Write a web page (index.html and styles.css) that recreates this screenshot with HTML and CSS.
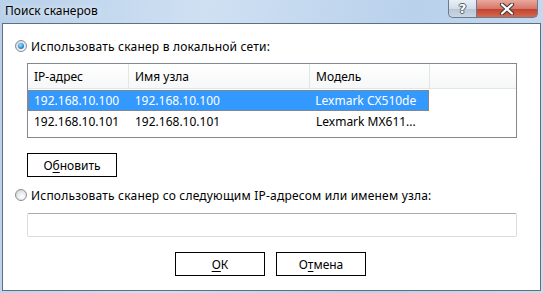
FILE: index.html
```html
<!DOCTYPE html>
<html>
<head>
    <title>Поиск сканеров</title>
    <link rel="stylesheet" href="styles.css">
</head>
<body>
    <div class="window">
        <div class="titlebar">
            <span class="title">Поиск сканеров</span>
            <div class="caption-buttons">
                <div class="cap-btn help-btn">?</div>
                <div class="cap-btn close-btn">
                    <svg width="16" height="12" viewBox="0 0 16 12">
                        <path d="M3 1.5 L13 10.5 M13 1.5 L3 10.5" stroke="#3a3a3a" stroke-width="4.2" stroke-linecap="round"/>
                        <path d="M3 1.5 L13 10.5 M13 1.5 L3 10.5" stroke="#fff" stroke-width="2.2" stroke-linecap="round"/>
                    </svg>
                </div>
            </div>
        </div>
        <div class="client">
            <label class="radio-row">
                <span class="radio checked"></span>
                <span>Использовать сканер в локальной сети:</span>
            </label>

            <div class="listview">
                <div class="lv-row lv-header">
                    <div class="col col-ip">IP-адрес</div>
                    <div class="col col-host">Имя узла</div>
                    <div class="col col-model">Модель</div>
                    <div class="col col-rest"></div>
                </div>
                <div class="lv-row selected">
                    <div class="col col-ip">192.168.10.100</div>
                    <div class="col col-host">192.168.10.100</div>
                    <div class="col col-model">Lexmark CX510de</div>
                </div>
                <div class="lv-row">
                    <div class="col col-ip">192.168.10.101</div>
                    <div class="col col-host">192.168.10.101</div>
                    <div class="col col-model">Lexmark MX611...</div>
                </div>
            </div>

            <button class="btn refresh-btn">О<u>б</u>новить</button>

            <label class="radio-row second">
                <span class="radio"></span>
                <span>Использовать сканер со следующим IP-адресом или именем узла:</span>
            </label>

            <input class="host-input" type="text">

            <div class="dialog-buttons">
                <button class="btn"><u>О</u>К</button>
                <button class="btn">О<u>т</u>мена</button>
            </div>
        </div>
    </div>
</body>
</html>
```

FILE: styles.css
```css
body {
    margin: 0;
    font-family: "Noto Sans", "Open Sans", sans-serif;
    font-size: 12px;
    color: #000;
    background-color: #c4d9ef;
}

.window {
    width: 543px;
    height: 293px;
    box-sizing: border-box;
    padding: 0 2px 2px 2px;
    background: linear-gradient(100deg, #b8d0ea 0%, #cfe0f2 35%, #b9d1ec 70%, #c8dbf0 100%);
    display: flex;
    flex-direction: column;
}

.titlebar {
    height: 23px;
    display: flex;
    justify-content: space-between;
    align-items: flex-start;
}

.title {
    padding: 3px 0 0 3px;
    line-height: 16px;
    text-shadow: 0 0 6px rgba(255, 255, 255, 0.9);
}

.caption-buttons {
    display: flex;
    margin-right: 3px;
}

.cap-btn {
    height: 18px;
    box-sizing: border-box;
    border: 1px solid #6c7a8c;
    border-top: none;
    display: flex;
    align-items: center;
    justify-content: center;
}

.help-btn {
    width: 28px;
    border-right: none;
    border-bottom-left-radius: 5px;
    background: linear-gradient(#e9eff6, #d2dde9 50%, #b7c6d6 51%, #c9d6e4);
    color: #fff;
    font-family: "DejaVu Sans", sans-serif;
    font-weight: bold;
    font-size: 13px;
    text-shadow: -1px 0 #505a66, 1px 0 #505a66, 0 -1px #505a66, 0 1px #505a66;
}

.close-btn {
    width: 62px;
    border-bottom-right-radius: 5px;
    background: linear-gradient(#eaa89c, #d5786a 50%, #c2402f 51%, #d56a50);
}

.client {
    flex: 1;
    background-color: #fff;
    border: 1px solid #5f6f80;
    padding: 14px 12px 0 12px;
    display: flex;
    flex-direction: column;
    align-items: flex-start;
}

.radio-row {
    display: flex;
    align-items: center;
    gap: 4px;
    height: 16px;
    white-space: nowrap;
    letter-spacing: 0.2px;
}

.radio {
    width: 10px;
    height: 10px;
    border-radius: 50%;
    border: 1px solid #8a8d91;
    background: radial-gradient(circle at 60% 65%, #ffffff 0%, #e6e8ea 50%, #c9cbce 100%);
    position: relative;
}

.radio.checked::after {
    content: "";
    position: absolute;
    left: 2px;
    top: 2px;
    width: 6px;
    height: 6px;
    border-radius: 50%;
    background: radial-gradient(circle at 40% 35%, #9fe0ff 0%, #2f90d8 55%, #0d4d8e 100%);
}

.listview {
    margin: 9px 0 0 12px;
    width: 490px;
    height: 75px;
    box-sizing: border-box;
    border: 1px solid #828790;
}

.lv-row {
    display: flex;
    height: 21px;
    align-items: center;
}

.lv-header {
    height: 24px;
    border-bottom: 1px solid #e5e5e5;
    background: linear-gradient(#ffffff, #f6f7f8);
    margin-bottom: 1px;
}

.lv-header .col {
    height: 100%;
    display: flex;
    align-items: center;
    border-right: 1px solid #e3e5e7;
}

.col {
    box-sizing: border-box;
    padding-left: 6px;
    white-space: nowrap;
}

.col-ip {
    width: 101px;
}

.col-host {
    width: 181px;
}

.col-model {
    width: 120px;
}

.lv-header .col-rest {
    flex: 1;
    border-right: none;
}

.lv-row.selected {
    width: 401px;
    background-color: #3399ff;
    color: #fff;
    outline: 1px dotted #c07a2a;
    outline-offset: -1px;
}

.btn {
    font-family: inherit;
    font-size: 12px;
    width: 90px;
    height: 24px;
    background-color: #fff;
    border: 1px solid #000;
    padding: 0;
    color: #000;
}

.btn u {
    text-underline-offset: 2px;
}

.refresh-btn {
    margin: 15px 0 0 12px;
}

.radio-row.second {
    margin-top: 10px;
}

.host-input {
    margin: 10px 0 0 12px;
    width: 490px;
    height: 24px;
    box-sizing: border-box;
    border: 1px solid #d8dde3;
    border-top-color: #abadb3;
    border-radius: 2px;
}

.dialog-buttons {
    align-self: stretch;
    display: flex;
    justify-content: center;
    gap: 11px;
    margin-top: 15px;
    padding-right: 2px;
}
```
